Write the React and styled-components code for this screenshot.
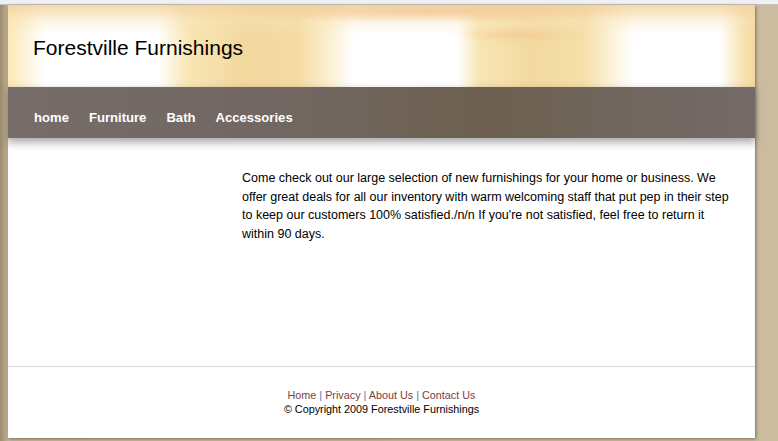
import React from 'react';
import styled, { createGlobalStyle } from 'styled-components';

const GlobalStyles = createGlobalStyle`
  html, body {
    margin: 0;
    padding: 0;
    height: 100%;
  }
  body {
    font-family: "Liberation Sans", Arial, sans-serif;
    background: #c9b99b;
  }
`;

const TopStrip = styled.div`
  height: 4px;
  background: #f0f0f0;
  border-bottom: 1px solid #c4c4c4;
`;

const Backdrop = styled.div`
  min-height: 436px;
  padding: 0 0 4px 8px;
  box-sizing: border-box;
  background:
    linear-gradient(90deg, #9c8c70 0px, #b3a383 5px, #c9b99b 9px, #cbbc9f 100%);
`;

const Page = styled.div`
  width: 747px;
  background: #fff;
  box-shadow: 1px 1px 3px rgba(60, 50, 30, 0.55);
  display: flex;
  flex-direction: column;
`;

const Header = styled.div`
  height: 82px;
  display: flex;
  align-items: center;
  padding-left: 25px;
  background:
    radial-gradient(ellipse 200px 12px at 420px 6px, rgba(242, 196, 140, 0.7), rgba(255,255,255,0) 100%),
    radial-gradient(ellipse 70px 8px at 510px 30px, rgba(242, 196, 140, 0.5), rgba(255,255,255,0) 100%),
    linear-gradient(180deg, rgba(244, 210, 158, 0.85) 0px, rgba(248, 228, 185, 0.4) 16px, rgba(255,255,255,0) 30px),
    linear-gradient(90deg,
      #fbe8b4 0px, #fff 36px, #fff 150px, #f8e6b4 180px, #f3d89f 235px,
      #f4dba3 290px, #fbefcf 320px, #fff 345px, #fff 450px, #f8e6b6 470px,
      #f3d9a0 520px, #f5dea9 575px, #fdf4dc 605px, #fff 625px, #fff 712px,
      #f7e2b0 735px, #f3d9a0 747px);
`;

const Title = styled.h1`
  margin: 4px 0 0;
  font-weight: normal;
  font-size: 21px;
  color: #000;
`;

const Nav = styled.nav`
  height: 51px;
  display: flex;
  align-items: center;
  gap: 20px;
  padding: 9px 0 0 26px;
  box-sizing: border-box;
  background: linear-gradient(90deg, #766c69 0%, #716660 40%, #6d604f 65%, #716760 85%, #746a67 100%);
  box-shadow: 0 3px 8px rgba(80, 80, 80, 0.45);
  position: relative;
`;

const NavLink = styled.a`
  color: #fff;
  font-weight: bold;
  font-size: 13.1px;
  text-decoration: none;
`;

const Body = styled.div`
  height: 228px;
  padding: 31px 0 0 234px;
  box-sizing: border-box;
  background: linear-gradient(180deg, #e6e6e6 0px, #fff 12px);
`;

const Intro = styled.p`
  margin: 0;
  width: 495px;
  font-size: 12.5px;
  line-height: 18.5px;
  color: #000;
`;

const Footer = styled.footer`
  border-top: 1px solid #d9d9d9;
  height: 72px;
  padding-top: 21px;
  box-sizing: border-box;
  text-align: center;
  font-size: 10.8px;
  line-height: 14px;
`;

const FootLink = styled.a`
  color: #7b3b45;
  text-decoration: none;
`;

const Sep = styled.span`
  color: #4a78b0;
`;

const links = ['Home', 'Privacy', 'About Us', 'Contact Us'];

function App() {
  return (
    <>
      <GlobalStyles />
      <TopStrip />
      <Backdrop>
        <Page>
          <Header>
            <Title>Forestville Furnishings</Title>
          </Header>
          <Nav>
            <NavLink href="#">home</NavLink>
            <NavLink href="#">Furniture</NavLink>
            <NavLink href="#">Bath</NavLink>
            <NavLink href="#">Accessories</NavLink>
          </Nav>
          <Body>
            <Intro>
              Come check out our large selection of new furnishings for your home or business. We
              offer great deals for all our inventory with warm welcoming staff that put pep in their step
              to keep our customers 100% satisfied./n/n If you're not satisfied, feel free to return it
              within 90 days.
            </Intro>
          </Body>
          <Footer>
            <div>
              {links.map((l, i) => (
                <React.Fragment key={l}>
                  {i > 0 && <Sep> | </Sep>}
                  <FootLink href="#">{l}</FootLink>
                </React.Fragment>
              ))}
            </div>
            <div>&copy; Copyright 2009 Forestville Furnishings</div>
          </Footer>
        </Page>
      </Backdrop>
    </>
  );
}

export default App;
